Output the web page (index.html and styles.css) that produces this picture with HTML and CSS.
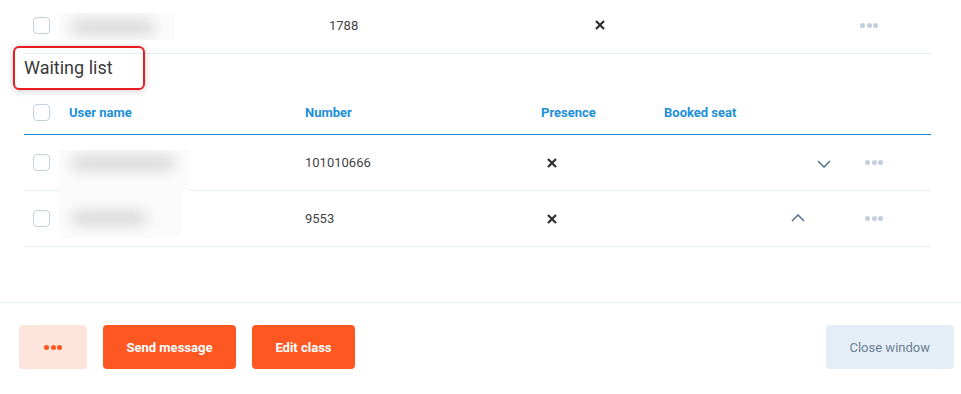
FILE: index.html
```html
<!DOCTYPE html>
<html lang="en">
<head>
    <meta charset="UTF-8">
    <meta name="viewport" content="width=device-width, initial-scale=1.0">
    <title>Class members</title>
    <link rel="stylesheet" href="styles.css">
</head>
<body>

    <div class="content">
        <!-- last row of the booked list -->
        <div class="row row-booked">
            <span class="check"></span>
            <div class="cell-name"><div class="blur blur-top"><i style="width: 84px"></i></div></div>
            <span class="cell">1788</span>
            <span class="cell"><svg class="cross" viewBox="0 0 10 10"><path d="M1 1L9 9M9 1L1 9"/></svg></span>
            <span class="dots"><i></i><i></i><i></i></span>
        </div>

        <h2 class="list-title">Waiting list</h2>

        <div class="row row-head">
            <span class="check"></span>
            <span class="head">User name</span>
            <span class="head">Number</span>
            <span class="head">Presence</span>
            <span class="head">Booked seat</span>
            <span></span>
        </div>

        <div class="row row-wait">
            <span class="check"></span>
            <div class="cell-name"><div class="blur blur-down"><i style="width: 104px"></i></div></div>
            <span class="cell">101010666</span>
            <span class="cell"><svg class="cross" viewBox="0 0 10 10"><path d="M1 1L9 9M9 1L1 9"/></svg></span>
            <span class="cell seat"><svg class="chevron down" viewBox="0 0 14 8"><path d="M1 1L7 7L13 1"/></svg></span>
            <span class="dots"><i></i><i></i><i></i></span>
        </div>

        <div class="row row-wait">
            <span class="check"></span>
            <div class="cell-name"><div class="blur blur-up"><i style="width: 76px"></i></div></div>
            <span class="cell">9553</span>
            <span class="cell"><svg class="cross" viewBox="0 0 10 10"><path d="M1 1L9 9M9 1L1 9"/></svg></span>
            <span class="cell seat"><svg class="chevron up" viewBox="0 0 14 8"><path d="M1 7L7 1L13 7"/></svg></span>
            <span class="dots"><i></i><i></i><i></i></span>
        </div>
    </div>

    <footer class="actions">
        <button class="btn btn-more"><span class="dots dots-orange"><i></i><i></i><i></i></span></button>
        <button class="btn btn-primary">Send message</button>
        <button class="btn btn-primary">Edit class</button>
        <button class="btn btn-close">Close window</button>
    </footer>

</body>
</html>
```

FILE: styles.css
```css
:root {
    --blue: #1c8fd8;
    --line: #e4eef6;
    --text: #444444;
    --orange: #fe5722;
    --peach: #fde5dc;
    --muted: #c3cfdc;
    --slate: #5b7590;
}

body {
    margin: 0;
    font-family: Roboto, "Noto Sans", Arial, sans-serif;
    font-size: 13px;
    color: var(--text);
    background: #ffffff;
}

.content {
    padding: 0 30px 0 24px;
}

.row {
    display: grid;
    align-items: center;
    border-bottom: 1px solid var(--line);
}

.row-booked {
    grid-template-columns: 35px 270px 266px 255px 1fr;
    height: 54px;
    padding-bottom: 3px;
    box-sizing: border-box;
}

.row-booked .dots {
    padding-left: 10px;
}

.row-booked .cross {
    margin-left: 0;
}

.row-head,
.row-wait {
    grid-template-columns: 45px 236px 236px 123px 186px 1fr;
}

.row-head {
    height: 44px;
    border-bottom: 1px solid #1a8ad6;
}

.row-wait {
    height: 55px;
}

.row-wait .dots {
    padding-left: 15px;
}

.check {
    display: block;
    width: 15px;
    height: 15px;
    margin-left: 9px;
    border: 1px solid #c3d0dd;
    border-radius: 4px;
}

.head {
    color: var(--blue);
    font-weight: 700;
    font-size: 13px;
}

.cell {
    display: flex;
    align-items: center;
}

.cell-name {
    align-self: stretch;
    display: flex;
    position: relative;
}

/* blurred user names */
.blur {
    width: 130px;
    background: #fbfbfb;
    overflow: hidden;
    display: flex;
    align-items: center;
    padding-left: 12px;
    box-sizing: border-box;
    position: relative;
}

.blur i {
    display: block;
    height: 14px;
    border-radius: 7px;
    background: #d6d6d6;
    filter: blur(7px);
}

.blur-top {
    width: 116px;
    height: 27px;
    margin-top: 13px;
}

.blur-down {
    height: 41px;
    align-self: flex-end;
    margin-left: -10px;
    margin-bottom: -1px;
    padding-bottom: 15px;
}

.blur-up {
    width: 123px;
    height: 47px;
    margin-left: -10px;
    margin-bottom: 8px;
    padding-top: 7px;
}

.cross {
    width: 10px;
    height: 10px;
    margin-left: 6px;
}

.cross path {
    stroke: #2e2e2e;
    stroke-width: 2.2;
    fill: none;
}

.seat {
    justify-content: flex-end;
}

.chevron {
    width: 14px;
    height: 8px;
}

.chevron path {
    stroke: var(--slate);
    stroke-width: 1.6;
    fill: none;
}

.chevron.down {
    margin-right: 19px;
    margin-top: 2px;
}

.chevron.up {
    margin-right: 45px;
    margin-top: -2px;
}

.dots {
    display: flex;
    gap: 1.5px;
}

.dots i {
    width: 5px;
    height: 5px;
    border-radius: 50%;
    background: var(--muted);
}

.list-title {
    position: relative;
    margin: 0;
    padding: 3px 0 11px 0;
    font-size: 18px;
    font-weight: 400;
    line-height: 22px;
    color: #3a3a3a;
}

/* red highlight round the title */
.list-title::before {
    content: "";
    position: absolute;
    top: -8px;
    left: -11px;
    width: 128px;
    height: 40px;
    border: 2px solid #ea1c22;
    border-radius: 6px;
    box-shadow: 0 1px 7px rgba(0, 0, 0, 0.2);
}

.actions {
    display: flex;
    gap: 16px;
    margin-top: 55px;
    padding: 22px 7px 25px 19px;
    border-top: 1px solid var(--line);
}

.btn {
    height: 44px;
    padding: 0 23.5px;
    border: none;
    border-radius: 4px;
    font-family: Roboto, "Noto Sans", Arial, sans-serif;
    font-size: 13px;
    cursor: pointer;
}

.btn-more {
    width: 68px;
    background: var(--peach);
    display: flex;
    align-items: center;
    justify-content: center;
}

.dots-orange i {
    background: var(--orange);
}

.btn-primary {
    background: var(--orange);
    color: #ffffff;
    font-weight: 700;
}

.btn-close {
    margin-left: auto;
    padding: 0 24px;
    background: #e5eef6;
    color: #6b7f94;
}
```
